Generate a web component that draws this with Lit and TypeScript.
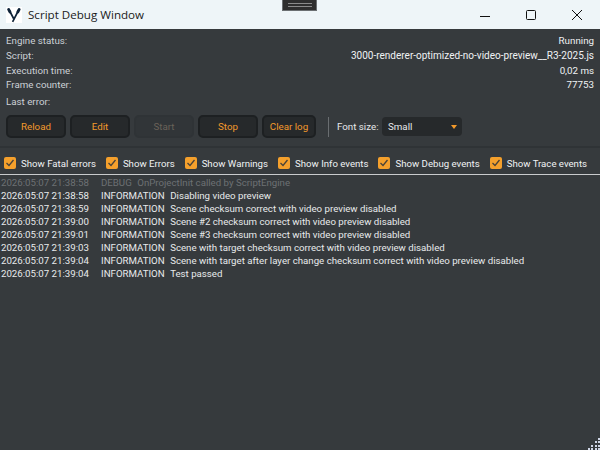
import { LitElement, html, css, svg } from "lit";
import { customElement } from "lit/decorators.js";

const info: [string, string][] = [
  ["Engine status:", "Running"],
  ["Script:", "3000-renderer-optimized-no-video-preview__R3-2025.js"],
  ["Execution time:", "0,02 ms"],
  ["Frame counter:", "77753"],
];
const checks = ["Show Fatal errors", "Show Errors", "Show Warnings", "Show Info events", "Show Debug events", "Show Trace events"];
const logs: [string, string, string][] = [
  ["2026:05:07 21:38:58", "DEBUG", "OnProjectInit called by ScriptEngine"],
  ["2026:05:07 21:38:58", "INFORMATION", "Disabling video preview"],
  ["2026:05:07 21:38:59", "INFORMATION", "Scene checksum correct with video preview disabled"],
  ["2026:05:07 21:39:00", "INFORMATION", "Scene #2 checksum correct with video preview disabled"],
  ["2026:05:07 21:39:01", "INFORMATION", "Scene #3 checksum correct with video preview disabled"],
  ["2026:05:07 21:39:03", "INFORMATION", "Scene with target checksum correct with video preview disabled"],
  ["2026:05:07 21:39:04", "INFORMATION", "Scene with target after layer change checksum correct with video preview disabled"],
  ["2026:05:07 21:39:04", "INFORMATION", "Test passed"],
];
const gripStops = [2, 5, 9, 12];
const gripDots: [number, number][] = [];
for (let r = 0; r < 4; r++) for (let c = 3 - r; c < 4; c++) gripDots.push([gripStops[c], gripStops[r]]);

@customElement("app-root")
export class AppRoot extends LitElement {
  static styles = css`
    :host { display: block; width: 600px; height: 450px; position: relative; overflow: hidden;
      background: #363a3d; color: #e6e8ea; font-family: Roboto, "Liberation Sans", sans-serif; font-size: 9.75px; }
    .title { height: 29px; background: #eef5f8; display: flex; align-items: center; color: #1a1a1a; }
    .logo { width: 16px; height: 16px; margin-left: 6px; background: #fff; flex: none; }
    .name { margin-left: 6px; font: 11.6px "Open Sans", sans-serif; flex: 1; }
    .win { width: 46px; height: 29px; display: flex; align-items: center; justify-content: center; flex: none; }
    .wins { display: flex; }
    .tab { position: absolute; left: 282px; top: 0; width: 35px; height: 11px; background: #2e2e2e; border: 1px solid #6b6f72; border-top: 0; box-sizing: border-box; display: flex; flex-direction: column; gap: 2px; align-items: center; justify-content: center; }
    .tab i { display: block; width: 24px; height: 1px; background: #8a8a8a; }
    .info { padding: 4px 6px 0 6px; display: flex; flex-direction: column; }
    .row { display: flex; justify-content: space-between; height: 15px; align-items: center; }
    .row:nth-child(3), .row:nth-child(4) { height: 14px; }
    .row:nth-child(2) span:last-child { font-size: 10px; }
    .row span:first-child { color: #ccd1d6; }
    .row span:last-child { color: #f0f2f4; }
    .err { height: 17px; display: flex; align-items: center; margin-top: 2px; color: #ccd1d6; }
    .bar { display: flex; align-items: center; gap: 4px; padding: 5px 6px 0; height: 23px; }
    button { width: 60px; height: 23px; box-sizing: border-box; background: #26292b; border: 2px solid #1d2022; border-radius: 5px; color: #f39a2b; font: 400 9.75px Roboto, sans-serif; padding: 0; }
    button.off { background: #313538; border-color: #2f3336; color: #6a6258; }
    button.clear { width: 54px; }
    .vsep { width: 1px; height: 20px; background: #6a6e71; margin: 0 4px 0 8px; }
    .fs { color: #e6e8ea; width: 41px; white-space: nowrap; }
    .select { width: 80px; height: 19px; background: #26292b; border-radius: 4px; display: flex; align-items: center; justify-content: space-between; padding: 0 5px 0 6px; box-sizing: border-box; color: #e6e8ea; }
    .caret { width: 0; height: 0; border-left: 3px solid transparent; border-right: 3px solid transparent; border-top: 4px solid #f39a2b; }
    .hr { height: 2px; background: #2f3336; margin-top: 8px; }
    .checks { display: flex; align-items: center; height: 22px; padding: 4px 4px 0; gap: 10px; font-size: 9.65px; }
    .check { display: flex; align-items: center; gap: 5px; color: #f0f2f4; }
    .box { width: 12px; height: 12px; background: #f5a02c; border-radius: 2px; display: flex; align-items: center; justify-content: center; }
    .line { height: 1px; background: #c9cbcd; }
    .log { padding-top: 1px; }
    .l { display: flex; height: 13px; align-items: center; padding-left: 1px; white-space: nowrap; color: #e8eaec; font-size: 9.68px; }
    .l .t { width: 100px; }
    .l .k { margin-right: 5.5px; }
    .l.dbg { color: #6d7174; }
    .grip { position: absolute; right: 0; bottom: 0; }
  `;

  render() {
    return html`
      <div class="title">
        <svg class="logo" viewBox="0 0 16 16">
          <path d="M2.6 2 7.6 11.5 M13.2 2 6.6 14.8" fill="none" stroke="#0f2338" stroke-width="1.7"/>
          <path d="M2.6 2.4 4 5 M13.2 2.4 11.8 5" fill="none" stroke="#0f2338" stroke-width="2.8" stroke-linecap="round"/>
        </svg>
        <span class="name">Script Debug Window</span>
        <div class="wins">
          <div class="win"><svg width="12" height="12" viewBox="0 0 12 12"><path d="M1 7.5h10" stroke="#111" fill="none"/></svg></div>
          <div class="win"><svg width="12" height="12" viewBox="0 0 12 12"><rect x="1.5" y="1.5" width="9" height="9" rx="1" stroke="#111" fill="none"/></svg></div>
          <div class="win"><svg width="12" height="12" viewBox="0 0 12 12"><path d="M1 1l10 10M11 1 1 11" stroke="#111" fill="none"/></svg></div>
        </div>
      </div>
      <div class="tab"><i></i><i></i></div>
      <div class="info">
        ${info.map(([a, b]) => html`<div class="row"><span>${a}</span><span>${b}</span></div>`)}
        <div class="err">Last error:</div>
      </div>
      <div class="bar">
        <button>Reload</button><button>Edit</button><button class="off">Start</button><button>Stop</button><button class="clear">Clear log</button>
        <div class="vsep"></div>
        <span class="fs">Font size:</span>
        <div class="select"><span>Small</span><span class="caret"></span></div>
      </div>
      <div class="hr"></div>
      <div class="checks">
        ${checks.map((c) => html`<div class="check"><span class="box"><svg width="10" height="10" viewBox="0 0 10 10"><path d="M1.5 5 4 7.5 8.5 2" fill="none" stroke="#4a4238" stroke-width="1.3"/></svg></span>${c}</div>`)}
      </div>
      <div class="line"></div>
      <div class="log">
        ${logs.map(([t, k, m]) => html`<div class="l ${k === "DEBUG" ? "dbg" : ""}"><span class="t">${t}</span><span class="k">${k}</span><span>${m}</span></div>`)}
      </div>
      <svg class="grip" width="14" height="14" viewBox="0 0 14 14">
        ${gripDots.map(([x, y]) => svg`<rect x=${x} y=${y} width="2" height="2" fill="#cfd6e6"/>`)}
      </svg>
    `;
  }
}
